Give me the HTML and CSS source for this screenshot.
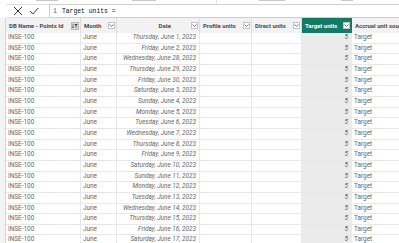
FILE: index.html
```html
<!DOCTYPE html>
<html lang="en">
<head>
<meta charset="UTF-8">
<meta name="viewport" content="width=device-width, initial-scale=1.0">
<title>Data view</title>
<link rel="stylesheet" href="styles.css">
</head>
<body>
<div class="ribbon">
  <span class="mark m1"></span>
  <span class="mark m2"></span>
  <span class="sep"></span>
  <span class="mark m3"></span>
  <span class="mark m4"></span>
</div>

<div class="page">
  <div class="side"></div>
  <div class="content">
    <div class="formula">
      <div class="fx-btns">
        <svg class="fx-icon" width="10" height="10" viewBox="0 0 10 10">
          <path d="M1 1 L9 9 M9 1 L1 9" stroke="#333" stroke-width="1" fill="none"/>
        </svg>
        <svg class="fx-icon" width="10" height="8" viewBox="0 0 10 8">
          <path d="M1 4 L3.8 7 L9.3 1" stroke="#333" stroke-width="1" fill="none"/>
        </svg>
      </div>
      <div class="fx-input">
        <span class="line-no">1</span>
        <span class="code">Target units =</span>
      </div>
    </div>

    <div class="row head">
      <div class="h">DB Name - Points Id
        <span class="btn sorted">
          <svg width="7" height="6" viewBox="0 0 7 6">
            <path d="M1.2 0.5 V5 M0.3 4 L1.2 5.2 L2.1 4" stroke="#333" stroke-width="0.7" fill="none"/>
            <path d="M2.8 0.8 H6.6 L5.1 2.6 V5.4 H4.3 V2.6 Z" fill="#333"/>
          </svg>
        </span>
      </div>
      <div class="h">Month <span class="btn"><svg width="5" height="3" viewBox="0 0 5 3"><path d="M0.5 0.5 L2.5 2.5 L4.5 0.5" stroke="#555" stroke-width="0.8" fill="none"/></svg></span></div>
      <div class="h center">Date <span class="btn"><svg width="5" height="3" viewBox="0 0 5 3"><path d="M0.5 0.5 L2.5 2.5 L4.5 0.5" stroke="#555" stroke-width="0.8" fill="none"/></svg></span></div>
      <div class="h">Profile units <span class="btn"><svg width="5" height="3" viewBox="0 0 5 3"><path d="M0.5 0.5 L2.5 2.5 L4.5 0.5" stroke="#555" stroke-width="0.8" fill="none"/></svg></span></div>
      <div class="h">Direct units <span class="btn"><svg width="5" height="3" viewBox="0 0 5 3"><path d="M0.5 0.5 L2.5 2.5 L4.5 0.5" stroke="#555" stroke-width="0.8" fill="none"/></svg></span></div>
      <div class="h active">Target units <span class="btn"><svg width="5" height="3" viewBox="0 0 5 3"><path d="M0.5 0.5 L2.5 2.5 L4.5 0.5" stroke="#555" stroke-width="0.8" fill="none"/></svg></span></div>
      <div class="h last">Accrual unit source</div>
    </div>

    <div class="row"><span class="c">INSE-100</span><span class="c">June</span><span class="c date">Thursday, June 1, 2023</span><span class="c"></span><span class="c"></span><span class="c num">5</span><span class="c">Target</span></div>
    <div class="row"><span class="c">INSE-100</span><span class="c">June</span><span class="c date">Friday, June 2, 2023</span><span class="c"></span><span class="c"></span><span class="c num">5</span><span class="c">Target</span></div>
    <div class="row"><span class="c">INSE-100</span><span class="c">June</span><span class="c date">Wednesday, June 28, 2023</span><span class="c"></span><span class="c"></span><span class="c num">5</span><span class="c">Target</span></div>
    <div class="row"><span class="c">INSE-100</span><span class="c">June</span><span class="c date">Thursday, June 29, 2023</span><span class="c"></span><span class="c"></span><span class="c num">5</span><span class="c">Target</span></div>
    <div class="row"><span class="c">INSE-100</span><span class="c">June</span><span class="c date">Friday, June 30, 2023</span><span class="c"></span><span class="c"></span><span class="c num">5</span><span class="c">Target</span></div>
    <div class="row"><span class="c">INSE-100</span><span class="c">June</span><span class="c date">Saturday, June 3, 2023</span><span class="c"></span><span class="c"></span><span class="c num">5</span><span class="c">Target</span></div>
    <div class="row"><span class="c">INSE-100</span><span class="c">June</span><span class="c date">Sunday, June 4, 2023</span><span class="c"></span><span class="c"></span><span class="c num">5</span><span class="c">Target</span></div>
    <div class="row"><span class="c">INSE-100</span><span class="c">June</span><span class="c date">Monday, June 5, 2023</span><span class="c"></span><span class="c"></span><span class="c num">5</span><span class="c">Target</span></div>
    <div class="row"><span class="c">INSE-100</span><span class="c">June</span><span class="c date">Tuesday, June 6, 2023</span><span class="c"></span><span class="c"></span><span class="c num">5</span><span class="c">Target</span></div>
    <div class="row"><span class="c">INSE-100</span><span class="c">June</span><span class="c date">Wednesday, June 7, 2023</span><span class="c"></span><span class="c"></span><span class="c num">5</span><span class="c">Target</span></div>
    <div class="row"><span class="c">INSE-100</span><span class="c">June</span><span class="c date">Thursday, June 8, 2023</span><span class="c"></span><span class="c"></span><span class="c num">5</span><span class="c">Target</span></div>
    <div class="row"><span class="c">INSE-100</span><span class="c">June</span><span class="c date">Friday, June 9, 2023</span><span class="c"></span><span class="c"></span><span class="c num">5</span><span class="c">Target</span></div>
    <div class="row"><span class="c">INSE-100</span><span class="c">June</span><span class="c date">Saturday, June 10, 2023</span><span class="c"></span><span class="c"></span><span class="c num">5</span><span class="c">Target</span></div>
    <div class="row"><span class="c">INSE-100</span><span class="c">June</span><span class="c date">Sunday, June 11, 2023</span><span class="c"></span><span class="c"></span><span class="c num">5</span><span class="c">Target</span></div>
    <div class="row"><span class="c">INSE-100</span><span class="c">June</span><span class="c date">Monday, June 12, 2023</span><span class="c"></span><span class="c"></span><span class="c num">5</span><span class="c">Target</span></div>
    <div class="row"><span class="c">INSE-100</span><span class="c">June</span><span class="c date">Tuesday, June 13, 2023</span><span class="c"></span><span class="c"></span><span class="c num">5</span><span class="c">Target</span></div>
    <div class="row"><span class="c">INSE-100</span><span class="c">June</span><span class="c date">Wednesday, June 14, 2023</span><span class="c"></span><span class="c"></span><span class="c num">5</span><span class="c">Target</span></div>
    <div class="row"><span class="c">INSE-100</span><span class="c">June</span><span class="c date">Thursday, June 15, 2023</span><span class="c"></span><span class="c"></span><span class="c num">5</span><span class="c">Target</span></div>
    <div class="row"><span class="c">INSE-100</span><span class="c">June</span><span class="c date">Friday, June 16, 2023</span><span class="c"></span><span class="c"></span><span class="c num">5</span><span class="c">Target</span></div>
    <div class="row"><span class="c">INSE-100</span><span class="c">June</span><span class="c date">Saturday, June 17, 2023</span><span class="c"></span><span class="c"></span><span class="c num">5</span><span class="c">Target</span></div>
  </div>
</div>
</body>
</html>
```

FILE: styles.css
```css
body {
  margin: 0;
  font-family: Roboto, 'Noto Sans', sans-serif;
  background: #fff;
  overflow: hidden;
  height: 243px;
}

/* bottom edge of the ribbon, mostly scrolled away */
.ribbon {
  height: 4px;
  display: flex;
  align-items: flex-start;
}

.mark {
  height: 1px;
  background: #c8c8c8;
}

.m1 { width: 22px; margin-left: 36px; }
.m2 { width: 24px; margin-left: 74px; }
.sep { width: 1px; height: 4px; background: #e2e2e2; margin-left: 60px; }
.m3 { width: 26px; margin-left: 42px; }
.m4 { width: 12px; margin-left: 56px; }

.page {
  display: flex;
}

.side {
  width: 5px;
  margin-top: 14px;
  background: #f3f3f3;
  border-right: 1px solid #d6d6d6;
  height: 230px;
}

.content {
  flex: 1;
  min-width: 0;
  overflow: hidden;
}

/* formula bar */
.formula {
  display: flex;
  height: 14px;
}

.fx-btns {
  width: 43px;
  box-sizing: border-box;
  border-top: 1px solid #e0e0e0;
  border-bottom: 1px solid #e0e0e0;
  display: flex;
  align-items: center;
  gap: 6px;
  padding-left: 7px;
}

.fx-input {
  flex: 1;
  box-sizing: border-box;
  border: 1px solid #cfcfcf;
  border-right: none;
  display: flex;
  align-items: center;
  padding-left: 3px;
  gap: 5px;
}

.line-no {
  font-family: 'Liberation Mono', monospace;
  font-size: 6.5px;
  color: #2b7a9b;
}

.code {
  font-family: 'Liberation Mono', monospace;
  font-size: 6.4px;
  color: #111;
}

/* grid */
.row {
  display: grid;
  grid-template-columns: 75px 36px 83px 52px 50px 50px 80px;
  height: 10.67px;
  box-sizing: border-box;
  border-bottom: 1px solid #e8e8e8;
}

.row.head {
  height: 15px;
  border-bottom: none;
  background: #f2f2f2;
}

.h {
  display: flex;
  align-items: center;
  justify-content: space-between;
  padding: 0 1px 0 3px;
  font-size: 6px;
  font-weight: bold;
  color: #4a4a4a;
  border-right: 1px solid #dcdcdc;
  white-space: nowrap;
  overflow: hidden;
}

.h.center {
  justify-content: flex-end;
  gap: 20px;
}

.h.active {
  background: #127a66;
  color: #fff;
  border-right-color: #127a66;
}

.h.last {
  border-right: none;
}

.btn {
  width: 7px;
  height: 7px;
  box-sizing: border-box;
  border: 1px solid #c4c4c4;
  background: #fff;
  display: flex;
  align-items: center;
  justify-content: center;
  flex-shrink: 0;
}

.btn.sorted {
  width: 8px;
  height: 8px;
  background: #dedede;
  border-color: #b8b8b8;
}

.c {
  font-size: 6.4px;
  line-height: 9.67px;
  color: #666;
  padding: 0 2px;
  border-right: 1px solid #e8e8e8;
  white-space: nowrap;
  overflow: hidden;
}

.c:last-child {
  border-right: none;
}

.date {
  font-style: italic;
  text-align: right;
  padding-right: 3px;
}

.num {
  text-align: right;
  font-style: italic;
  padding-right: 3px;
  background: #ebebeb;
  border-right-color: #ebebeb;
}
```
